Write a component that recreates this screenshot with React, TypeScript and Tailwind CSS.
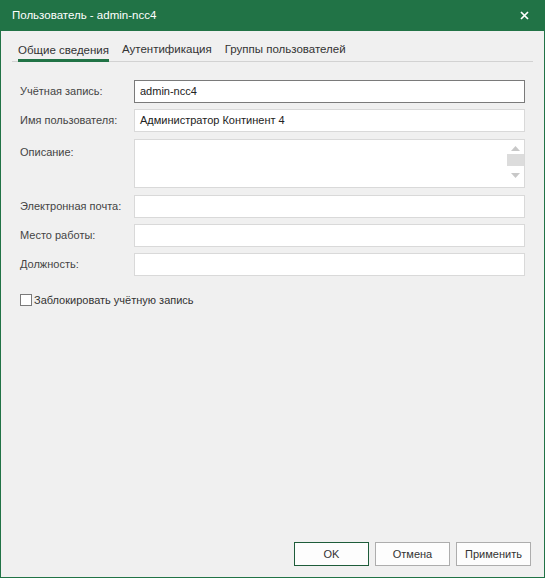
import React from "react";

const font = { fontFamily: '"Liberation Sans", Arial, sans-serif' };

function Field({ label, value, focused }: { label: string; value?: string; focused?: boolean }) {
  return (
    <div className="flex items-center h-[23px]">
      <div className="w-[114px] text-[11px] text-[#444] whitespace-nowrap">{label}</div>
      <div
        className={
          "flex-1 h-[23px] bg-white border flex items-center px-[5px] text-[11px] text-[#222] " +
          (focused ? "border-[#7a7a7a]" : "border-[#d9d9d9]")
        }
      >
        {value}
      </div>
    </div>
  );
}

export default function App() {
  return (
    <div className="w-[545px] h-[578px] flex flex-col bg-[#217346] overflow-hidden" style={font}>
      <div className="h-[31px] flex items-center justify-between pl-[12px] pr-[16px] text-white text-[11.5px]">
        <span>Пользователь - admin-ncc4</span>
        <svg width="9" height="9" viewBox="0 0 9 9">
          <path d="M1 1 L8 8 M8 1 L1 8" stroke="white" strokeWidth="1.7" />
        </svg>
      </div>
      <div className="flex-1 mx-[1px] mb-[1px] bg-[#f0f0f0] flex flex-col">
        <div className="mx-[11px] mt-[10px] border-b border-[#d2d2d2] flex items-end gap-[13px] pl-[6px] h-[21px] text-[11.5px] text-[#333]">
          <div className="h-[21px] border-b-[3px] border-[#217346] -mb-[1px] leading-[14px] pt-[2px]">Общие сведения</div>
          <div className="h-[21px] leading-[14px] pt-[2px]">Аутентификация</div>
          <div className="h-[21px] leading-[14px] pt-[2px]">Группы пользователей</div>
        </div>
        <div className="flex flex-col gap-[6px] pl-[19px] pr-[19px] mt-[18px]">
          <Field label="Учётная запись:" value="admin-ncc4" focused />
          <Field label="Имя пользователя:" value="Администратор Континент 4" />
          <div className="flex items-start h-[49px] my-[1px]">
            <div className="w-[114px] text-[11px] text-[#444] pt-[5px]">Описание:</div>
            <div className="flex-1 h-[49px] bg-white border border-[#d9d9d9] flex justify-end">
              <div className="w-[17px] flex flex-col items-center pt-[6px]">
                <svg width="9" height="5" viewBox="0 0 9 5">
                  <path d="M0 5 L4.5 0 L9 5 Z" fill="#c8c8c8" />
                </svg>
                <div className="w-[17px] h-[12px] bg-[#dcdcdc] mt-[3px]" />
                <svg width="9" height="5" viewBox="0 0 9 5" className="mt-[7px]">
                  <path d="M0 0 L4.5 5 L9 0 Z" fill="#c8c8c8" />
                </svg>
              </div>
            </div>
          </div>
          <Field label="Электронная почта:" />
          <Field label="Место работы:" />
          <Field label="Должность:" />
          <div className="flex items-center mt-[10px] gap-[2px] text-[11px] text-[#333]">
            <div className="w-[12px] h-[12px] border border-[#7a7a7a] bg-white" />
            <span>Заблокировать учётную запись</span>
          </div>
        </div>
        <div className="flex-1" />
        <div className="flex justify-end gap-[6px] pr-[13px] pb-[11px] text-[11px] text-[#333]">
          <div className="w-[75px] h-[24px] bg-[#fdfdfd] border border-[#1e5c3a] flex items-center justify-center">OK</div>
          <div className="w-[75px] h-[24px] bg-[#fdfdfd] border border-[#adadad] flex items-center justify-center">Отмена</div>
          <div className="w-[75px] h-[24px] bg-[#fdfdfd] border border-[#adadad] flex items-center justify-center">Применить</div>
        </div>
      </div>
    </div>
  );
}
